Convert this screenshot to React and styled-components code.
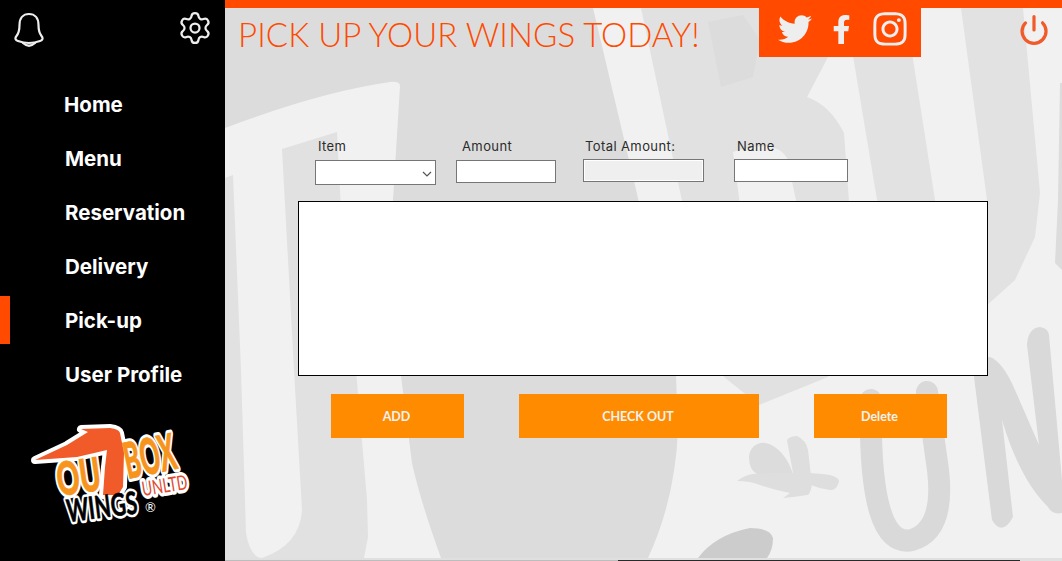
import React from 'react';
import styled, { createGlobalStyle } from 'styled-components';
import { Settings, Power } from 'lucide-react';
import { FaTwitter, FaFacebookF, FaInstagram } from 'react-icons/fa';

const GlobalStyle = createGlobalStyle`
  html, body {
    margin: 0;
    padding: 0;
    height: 100%;
    overflow: hidden;
  }
`;

const Page = styled.div`
  display: grid;
  grid-template-columns: 225px 1fr;
  width: 1062px;
  height: 561px;
  font-family: "Inter", sans-serif;
`;

const Sidebar = styled.nav`
  background-color: #000;
  display: flex;
  flex-direction: column;
`;

const SideIcons = styled.div`
  display: flex;
  justify-content: space-between;
  align-items: flex-start;
  padding: 12px 12px 0 14px;
  color: #eeeeee;
  height: 77px;
  box-sizing: border-box;
`;

const GearWrap = styled.div`
  margin-top: -2px;
`;

const NavList = styled.div`
  display: flex;
  flex-direction: column;
`;

const NavItem = styled.a`
  height: 54px;
  display: flex;
  align-items: center;
  padding-left: ${props => props.$pad || 65}px;
  box-sizing: border-box;
  color: #fff;
  font-size: 20.5px;
  font-weight: 700;
  position: relative;
  ${props => props.$active && `
    &::before {
      content: '';
      position: absolute;
      left: 0;
      top: 3px;
      width: 10px;
      height: 48px;
      background-color: #ff4a00;
    }
  `}
`;

const LogoWrap = styled.div`
  margin: 19px 0 0 30px;
`;

const Main = styled.main`
  position: relative;
  overflow: hidden;
  background-color: #f1f1f1;
`;

const BackdropSvg = styled.svg`
  position: absolute;
  inset: 0;
  width: 837px;
  height: 561px;
`;

const Content = styled.div`
  position: relative;
  display: flex;
  flex-direction: column;
`;

const TopLine = styled.div`
  height: 8px;
  background-color: #ff4a00;
`;

const Header = styled.header`
  display: flex;
  height: 49px;
  align-items: flex-start;
`;

const Title = styled.h1`
  margin: 7px 0 0 13px;
  width: 521px;
  color: #ff4a00;
  font-family: "Lato", sans-serif;
  font-size: 33px;
  line-height: 38px;
  font-weight: 300;
  letter-spacing: 0.08px;
  white-space: nowrap;
`;

const Social = styled.div`
  width: 162px;
  height: 49px;
  background-color: #ff4a00;
  color: #eeeeee;
  display: flex;
  align-items: center;
  gap: 15px;
  padding: 0 0 7px 19px;
  box-sizing: border-box;
`;

const PowerWrap = styled.div`
  margin: 6px 0 0 97px;
  color: #f15a29;
`;

const FormRow = styled.div`
  display: flex;
  margin: 81px 0 0 90px;
`;

const Field = styled.label`
  display: flex;
  flex-direction: column;
  width: ${props => props.$width}px;
  margin-right: ${props => props.$gap || 0}px;
  color: #2b2b2b;
  font-size: 13px;
  line-height: 16px;
  letter-spacing: 0.4px;
`;

const FieldName = styled.span`
  padding-left: ${props => props.$pad}px;
  height: 21px;
  white-space: nowrap;
`;

const Input = styled.input`
  box-sizing: border-box;
  width: 100%;
  height: 23px;
  border: 1px solid #767676;
  padding: 0;
  margin-top: ${props => props.$top || 0}px;
  background-color: ${props => (props.disabled ? '#efefef' : '#fff')};
  outline: ${props => (props.disabled ? '1px solid #fff' : 'none')};
  outline-offset: -2px;
`;

const SelectBox = styled.div`
  box-sizing: border-box;
  width: 100%;
  height: 25px;
  margin-top: 1px;
  border: 1px solid #767676;
  background-color: #fff;
  display: flex;
  align-items: center;
  justify-content: flex-end;
  padding: 2px 3px 0 0;
`;

const ListBox = styled.div`
  box-sizing: border-box;
  width: 690px;
  height: 175px;
  margin: 16px 0 0 73px;
  background-color: #fff;
  border: 1px solid #000;
`;

const ButtonRow = styled.div`
  display: flex;
  margin: 18px 0 0 106px;
  gap: 55px;
`;

const ActionButton = styled.button`
  width: ${props => props.$width}px;
  height: 44px;
  border: 0;
  padding: 0 2px 0 0;
  background-color: #ff8c00;
  color: #f2f2f2;
  font-family: "Lato", sans-serif;
  font-size: 12.5px;
  font-weight: 700;
`;

const navItems = [
  { name: 'Home', pad: 64 },
  { name: 'Menu' },
  { name: 'Reservation' },
  { name: 'Delivery' },
  { name: 'Pick-up', active: true },
  { name: 'User Profile' },
];

const logoWords = [
  { text: 'OU', x: 29, y: 76, size: 46, width: 44, angle: -8, weight: 900, fill: '#f7941d', thick: 0.8, halo: 7 },
  { text: 'BOX', x: 98, y: 59, size: 50, width: 52, angle: -12, weight: 900, fill: '#f7941d', thick: 0.8, halo: 7 },
  { text: 'UNLTD', x: 113, y: 76, size: 20, width: 46, angle: -9, weight: 400, fill: '#e2492f', thick: 0, halo: 7 },
  { text: 'WINGS', x: 38, y: 102, size: 31, width: 71, angle: -7, weight: 700, fill: '#000', thick: 0.6, halo: 6 },
];

const LogoWord = ({ word, outline }) => (
  <text
    x={word.x}
    y={word.y}
    transform={`rotate(${word.angle} ${word.x} ${word.y})`}
    fontFamily="Lato, sans-serif"
    fontWeight={word.weight}
    fontSize={word.size}
    textLength={word.width}
    lengthAdjust="spacingAndGlyphs"
    fill={outline ? '#fff' : word.fill}
    stroke={outline ? '#fff' : word.fill}
    strokeWidth={outline ? word.halo : word.thick}
    strokeLinejoin="round"
  >
    {word.text}
  </text>
);

const wingPath = 'M5 40 L37 25 L58 12 L51 9 L80 8 Q89 9 90 13 L94 33 L93 67 L88 75 L73 75 L75 47 L77 30 L47 37 Z';

const Logo = () => (
  <svg width="165" height="110" viewBox="0 0 165 110" style={{ display: 'block', overflow: 'visible' }}>
    <path d={wingPath} fill="#fff" stroke="#fff" strokeWidth="8" strokeLinejoin="round" />
    {logoWords.map(word => <LogoWord key={word.text} word={word} outline />)}
    {logoWords.slice(0, 3).map(word => <LogoWord key={word.text} word={word} />)}
    <path d={wingPath} fill="#f15a29" />
    <LogoWord word={logoWords[3]} />
    <text x="115" y="92" fontFamily="Lato, sans-serif" fontSize="13" fill="#fff">®</text>
  </svg>
);

const BellIcon = () => (
  <svg width="30" height="35" viewBox="0 0 30 35" fill="none" stroke="currentColor" strokeWidth="2.2" strokeLinecap="round" strokeLinejoin="round">
    <path d="M15 2 C9 2 5.5 6.5 5.5 13 C5.5 19 5 21 2.5 24 C0.5 26.5 1.5 28 4 29 C8 30.5 11 31 15 31 C19 31 22 30.5 26 29 C28.5 28 29.5 26.5 27.5 24 C25 21 24.5 19 24.5 13 C24.5 6.5 21 2 15 2 Z" />
    <path d="M9 31 Q15 36.5 21 31" />
  </svg>
);

const Backdrop = () => (
  <BackdropSvg viewBox="225 0 837 561">
    <path d="M225 8H593L642 215L676 376L678 430Q675 500 648 558H441Q420 500 412 463L401 376L393 200L400 86Q400 81 390 82Q320 92 225 128Z" fill="#dcdcdc" />
    <path d="M641 8H760V57H828L807 97Q830 105 844 133L850 215L856 300L828 377L759 405L724 377L685 215Z" fill="#e1e1e1" />
    <path d="M708 22L743 15L760 40L753 77L721 87Z" fill="#dcdcdc" />
    <path d="M733 152Q775 138 787 158L797 205L760 300L740 205Z" fill="#f1f1f1" />
    <path d="M282 149L337 132L341 210L356 370L367 500L368 537L364 558H262Q300 545 302 510L294 370Z" fill="#e1e1e1" />
    <path d="M225 178L233 175L241 370L246 533Q250 557 262 558H225Z" fill="#e1e1e1" />
    <path d="M845 8H905L935 200L965 330L925 376Q905 300 877 200Z" fill="#e2e2e2" />
    <path d="M961 8H1023L1040 193L1035 237L1015 280L985 307L987 200Z" fill="#e2e2e2" />
    <path d="M1060 83L1058 200L1055 263L1062 270V83Z" fill="#dcdcdc" />
    <path d="M871 400Q868 550 912 540Q945 530 938 470L927 392" fill="none" stroke="#d9d9d9" strokeWidth="22" strokeLinecap="round" />
    <path d="M974 377Q978 358 990 357Q1003 362 1015 390L1039 445L1027 345Q1028 328 1040 327Q1048 328 1049 335L1062 480V513Q1052 515 1048 507Q1020 480 1002 420L1013 517Q1002 537 992 520Z" fill="#d9d9d9" />
    <path d="M749 457C750 445 760 442 765 443C778 445 790 460 794 478L757 474Q749 470 749 457Z" fill="#dcdcdc" />
    <path d="M787 440Q790 436 797 436Q806 440 808 450L812 485Q810 495 807 495Q795 497 783 498L790 493Q775 490 760 485Q750 481 737 481Q745 475 753 474Q775 472 793 473Z" fill="#dedede" />
    <path d="M810 473Q825 474 830 475Q840 478 839 482Q836 491 830 490Q820 489 811 485Z" fill="#dedede" />
    <path d="M698 558Q715 535 750 528Q770 528 773 538Q773 550 767 558Z" fill="#cccccc" />
    <rect x="225" y="558" width="837" height="3" fill="#e0e0e0" />
    <rect x="225" y="560" width="393" height="1" fill="#bdbdbd" />
    <rect x="618" y="560" width="402" height="1" fill="#2a2a2a" />
  </BackdropSvg>
);

const App = () => (
  <Page>
    <GlobalStyle />
    <Sidebar>
      <SideIcons>
        <BellIcon />
        <GearWrap><Settings size={36} strokeWidth={1.5} /></GearWrap>
      </SideIcons>
      <NavList>
        {navItems.map(item => (
          <NavItem key={item.name} $active={item.active} $pad={item.pad}>{item.name}</NavItem>
        ))}
      </NavList>
      <LogoWrap><Logo /></LogoWrap>
    </Sidebar>
    <Main>
      <Backdrop />
      <Content>
        <TopLine />
        <Header>
          <Title>PICK UP YOUR WINGS TODAY!</Title>
          <Social>
            <FaTwitter size={34} />
            <FaFacebookF size={29} />
            <FaInstagram size={38} />
          </Social>
          <PowerWrap><Power size={32} strokeWidth={2.4} /></PowerWrap>
        </Header>
        <FormRow>
          <Field $width={121} $gap={20}>
            <FieldName $pad={3}>Item</FieldName>
            <SelectBox>
              <svg width="10" height="10" viewBox="0 0 10 10" fill="none" stroke="#555" strokeWidth="1.2"><path d="M1 3l4 4 4-4" /></svg>
            </SelectBox>
          </Field>
          <Field $width={100} $gap={27}>
            <FieldName $pad={6}>Amount</FieldName>
            <Input $top={1} />
          </Field>
          <Field $width={121} $gap={30}>
            <FieldName $pad={2}>Total Amount:</FieldName>
            <Input disabled />
          </Field>
          <Field $width={114}>
            <FieldName $pad={3}>Name</FieldName>
            <Input />
          </Field>
        </FormRow>
        <ListBox />
        <ButtonRow>
          <ActionButton $width={133}>ADD</ActionButton>
          <ActionButton $width={240}>CHECK OUT</ActionButton>
          <ActionButton $width={133}>Delete</ActionButton>
        </ButtonRow>
      </Content>
    </Main>
  </Page>
);

export default App;
